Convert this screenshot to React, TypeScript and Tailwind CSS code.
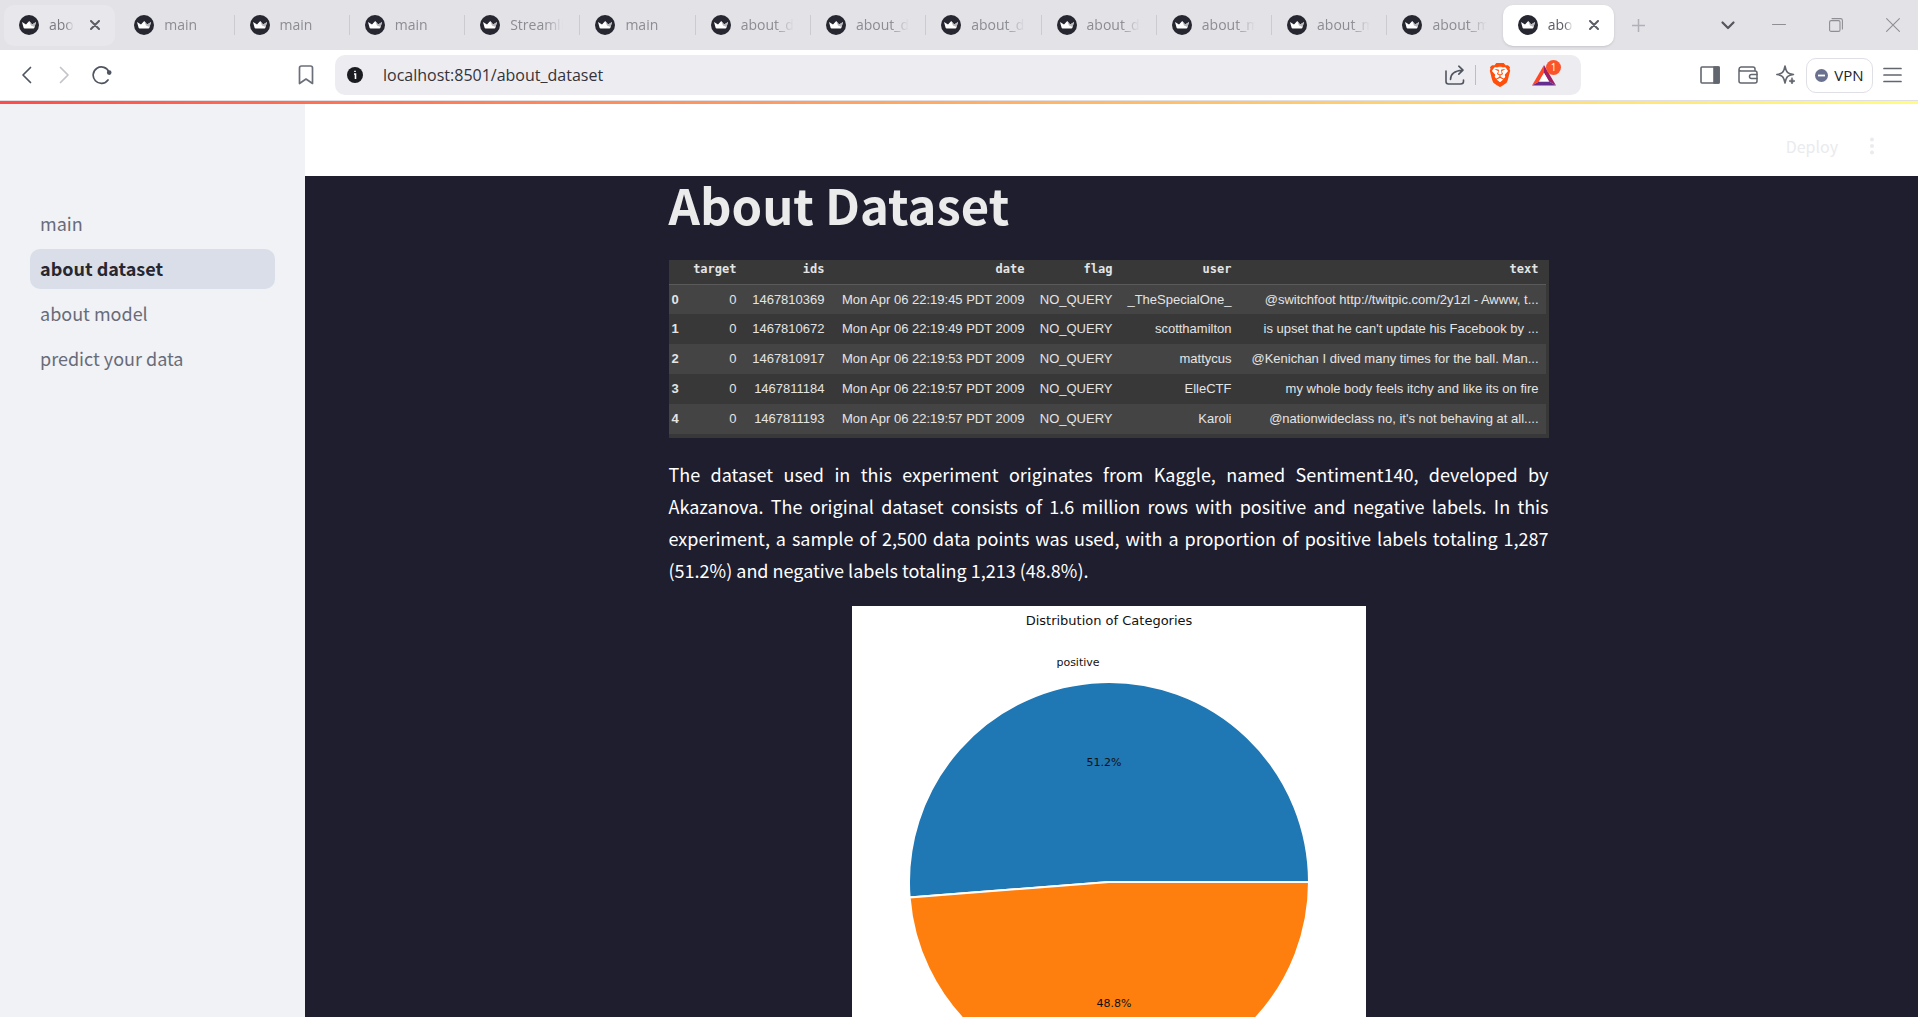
import React from "react";
import { SiBrave } from "react-icons/si";

const UI = "font-['Open_Sans','Noto_Sans',sans-serif]";
const SOURCE = "font-['Noto_Sans_CJK_JP',sans-serif]";

type TabInfo = { title: string; state?: "hover" | "active"; separator?: boolean };

const tabs: TabInfo[] = [
  { title: "about_dataset", state: "hover" },
  { title: "main", separator: true },
  { title: "main", separator: true },
  { title: "main", separator: true },
  { title: "Streamlit", separator: true },
  { title: "main", separator: true },
  { title: "about_dataset", separator: true },
  { title: "about_dataset", separator: true },
  { title: "about_dataset", separator: true },
  { title: "about_dataset", separator: true },
  { title: "about_model", separator: true },
  { title: "about_model", separator: true },
  { title: "about_model" },
  { title: "about_dataset", state: "active" },
];

const pages = ["main", "about dataset", "about model", "predict your data"];

const columns = ["target", "ids", "date", "flag", "user", "text"];

const rows = [
  ["0", "1467810369", "Mon Apr 06 22:19:45 PDT 2009", "NO_QUERY", "_TheSpecialOne_", "@switchfoot http://twitpic.com/2y1zl - Awww, t..."],
  ["0", "1467810672", "Mon Apr 06 22:19:49 PDT 2009", "NO_QUERY", "scotthamilton", "is upset that he can't update his Facebook by ..."],
  ["0", "1467810917", "Mon Apr 06 22:19:53 PDT 2009", "NO_QUERY", "mattycus", "@Kenichan I dived many times for the ball. Man..."],
  ["0", "1467811184", "Mon Apr 06 22:19:57 PDT 2009", "NO_QUERY", "ElleCTF", "my whole body feels itchy and like its on fire"],
  ["0", "1467811193", "Mon Apr 06 22:19:57 PDT 2009", "NO_QUERY", "Karoli", "@nationwideclass no, it's not behaving at all...."],
];

function Favicon() {
  return (
    <svg viewBox="0 0 20 20" className="size-5 shrink-0" aria-hidden="true">
      <circle cx="10" cy="10" r="10" fill="#262730" />
      <path d="M3 7 7 9.4 10.2 6 13.2 9.4 17 7 15.4 12.8Q15.2 13.6 14.4 13.6H5.6Q4.8 13.6 4.6 12.8Z" fill="#fff" />
      <path d="M10.2 6 13.2 9.4 17 7 15.6 12 12 10.4Z" fill="#b9b9bd" />
    </svg>
  );
}

type IconProps = { children: React.ReactNode; className: string; box?: string; width?: number };

function Icon({ children, className, box = "0 0 24 24", width = 2 }: IconProps) {
  return (
    <svg viewBox={box} className={className} fill="none" stroke="currentColor" strokeWidth={width} strokeLinecap="round" strokeLinejoin="round" aria-hidden="true">
      {children}
    </svg>
  );
}

function Tab({ title, state, separator }: TabInfo) {
  const shell =
    state === "active"
      ? "bg-white text-[#5c5c66] shadow-sm"
      : state === "hover"
        ? "bg-[#e8e8ec] text-[#7b7b82]"
        : "text-[#8c8c93]";
  return (
    <div className="flex min-w-0 flex-1 items-center">
      <div className={`mr-1 flex h-[41px] min-w-0 flex-1 items-center rounded-[10px] pl-[15px] ${state ? "pr-[15px]" : "pr-3"} ${shell}`}>
        <button role="tab" aria-selected={state === "active"} className="flex min-w-0 flex-1 items-center gap-[10px] text-left">
          <Favicon />
          <span className="min-w-0 flex-1 overflow-hidden whitespace-nowrap text-[14px] leading-6 [mask-image:linear-gradient(to_right,black_65%,transparent)]">
            {title}
          </span>
        </button>
        {state && (
          <button aria-label="Close tab" className="ml-4 shrink-0 text-[#5c5c66]">
            <Icon className="size-[10px]" box="0 0 10 10">
              <path d="M1 1 9 9M9 1 1 9" />
            </Icon>
          </button>
        )}
      </div>
      {separator && <span className="h-5 w-px bg-[#cbcbd0]" />}
    </div>
  );
}

function TabStrip() {
  return (
    <div className="flex h-[50px] shrink-0 items-center justify-between bg-[#e3e2e7] pl-1">
      <div role="tablist" className="flex max-w-[1614px] flex-1">
        {tabs.map((t, i) => (
          <Tab key={i} {...t} />
        ))}
      </div>
      <button aria-label="New tab" className="ml-[14px] text-[#b0b0b6]">
        <Icon className="size-[13px]" box="0 0 13 13" width={1.5}>
          <path d="M6.5 0V13M0 6.5H13" />
        </Icon>
      </button>
      <div className="ml-auto flex items-center gap-9 pr-[18px] text-[#8e8e94]">
        <button aria-label="Search tabs" className="text-[#55555e]">
          <Icon className="size-4" box="0 0 16 16" width={2.2}>
            <path d="M2.5 5.5 8 11 13.5 5.5" />
          </Icon>
        </button>
        <div className="flex items-center gap-[43px]">
          <button aria-label="Minimize">
            <Icon className="size-[14px]" box="0 0 14 14" width={1}>
              <path d="M.5 6.5H13.5" />
            </Icon>
          </button>
          <button aria-label="Restore">
            <Icon className="size-[14px]" box="0 0 14 14" width={1.1}>
              <rect x=".6" y="2.6" width="10.4" height="10.8" rx="1.5" />
              <path d="M3 .6H11.5Q13.4.6 13.4 2.5V11" />
            </Icon>
          </button>
          <button aria-label="Close window">
            <Icon className="size-[14px]" box="0 0 14 14" width={1.1}>
              <path d="M.6.6 13.4 13.4M13.4.6.6 13.4" />
            </Icon>
          </button>
        </div>
      </div>
    </div>
  );
}

function AddressBar() {
  return (
    <div className="flex h-10 max-w-[1246px] flex-1 items-center rounded-[10px] bg-[#edecf1] pl-3">
      <svg viewBox="0 0 16 16" className="size-4 shrink-0" aria-hidden="true">
        <circle cx="8" cy="8" r="8" fill="#1b1b22" />
        <path d="M7 7H8.5V12M8 3.8V5" stroke="#fff" strokeWidth="1.6" fill="none" />
      </svg>
      <input
        aria-label="Address"
        defaultValue="localhost:8501/about_dataset"
        className="ml-5 min-w-0 flex-1 bg-transparent text-[16px] text-[#33333b] outline-none"
      />
      <button aria-label="Share" className="text-[#4f5560]">
        <Icon className="size-5" box="0 0 20 20" width={1.6}>
          <path d="M1 6V16.5Q1 19 3.5 19H15.5Q18.5 19 18.5 16.5V15" />
          <path d="M5.5 14.5Q5.5 6 17.5 5.2M13.8 1.2 18 5.2 13.8 9.2" />
        </Icon>
      </button>
      <span className="ml-[10px] h-5 w-px bg-[#bdbdc4]" />
      <button aria-label="Brave Shields" className="relative ml-3 flex">
        <span className="absolute inset-x-1 inset-y-[5px] bg-white" />
        <SiBrave className="relative size-6 text-[#ff4f0a]" />
      </button>
      <button aria-label="Brave Rewards" className="relative ml-5 mr-[25px]">
        <svg viewBox="0 0 24 21" className="h-[21px] w-6" aria-hidden="true">
          <path d="M12 0 0 20.5 7 16.5 12 8Z" fill="#ff4724" />
          <path d="M12 0 24 20.5 17 16.5 12 8Z" fill="#9e1f63" />
          <path d="M0 20.5H24L17 16.5H7Z" fill="#662d91" />
          <path d="M12 8 7 16.5H17Z" fill="#fff" />
        </svg>
        <span className="absolute -right-[5px] -top-[5px] flex size-[15px] items-center justify-center rounded-full bg-[#fb542b] text-[10px] leading-none text-white">
          1
        </span>
      </button>
    </div>
  );
}

function Toolbar() {
  return (
    <div className="flex h-[50px] shrink-0 items-center bg-white pl-5 pr-4">
      <button aria-label="Back" className="text-[#4f5560]">
        <Icon className="h-[18px] w-3" box="0 0 12 18" width={1.7}>
          <path d="M10.5 1.5 3 9 10.5 16.5" />
        </Icon>
      </button>
      <button aria-label="Forward" className="ml-[27px] text-[#c3c3c9]">
        <Icon className="h-[18px] w-3" box="0 0 12 18" width={1.7}>
          <path d="M1.5 1.5 9 9 1.5 16.5" />
        </Icon>
      </button>
      <button aria-label="Reload" className="ml-[21px] text-[#4f5560]">
        <Icon className="size-5" box="0 0 20 20" width={1.7}>
          <path d="M16 15A8.2 8.2 0 1 1 17 7.2" />
          <circle cx="17.2" cy="7.6" r="1.5" fill="currentColor" />
        </Icon>
      </button>
      <button aria-label="Bookmark" className="ml-[186px] text-[#6b6f79]">
        <Icon className="h-5 w-4" box="0 0 16 20" width={1.7}>
          <path d="M1.5 3Q1.5 1 3.5 1H12.5Q14.5 1 14.5 3V18.5L8 14 1.5 18.5Z" />
        </Icon>
      </button>
      <div className="ml-[21px] flex flex-1">
        <AddressBar />
      </div>
      <div className="flex items-center gap-[18px] text-[#62666f]">
        <button aria-label="Sidebar">
          <Icon className="h-[18px] w-5" box="0 0 20 18" width={1.6}>
            <rect x="1" y="1" width="18" height="16" rx="1" />
            <path d="M14 1H19V17H14Z" fill="currentColor" />
          </Icon>
        </button>
        <button aria-label="Wallet">
          <Icon className="h-[18px] w-5" box="0 0 20 18" width={1.5}>
            <path d="M1 3.5V15Q1 17 3 17H17Q19 17 19 15V7Q19 5 17 5H3Q1 5 1 3.2T3 1H15Q17 1 17 3V5" />
            <path d="M19 8.5H13.5Q11.5 8.5 11.5 10.5T13.5 12.5H19" />
          </Icon>
        </button>
        <button aria-label="Leo AI">
          <Icon className="size-5" box="0 0 20 20" width={1.5}>
            <path d="M9 1Q9.9 6 11.8 7.6 13 8.8 17.5 9.5 13 10.2 11.8 11.4 9.9 13 9 18 8.1 13 6.2 11.4 5 10.2 .8 9.5 5 8.8 6.2 7.6 8.1 6 9 1Z" />
            <path d="M16 13Q16.3 15.8 19 16 16.3 16.3 16 19 15.7 16.3 13 16 15.7 15.8 16 13Z" fill="currentColor" strokeWidth={0.8} />
          </Icon>
        </button>
      </div>
      <button className="ml-[10px] flex h-[35px] w-[67px] items-center justify-center gap-[6px] rounded-[10px] border border-[#dfdfe6] text-[15px] text-[#22222a]">
        <svg viewBox="0 0 13 13" className="size-[13px]" aria-hidden="true">
          <circle cx="6.5" cy="6.5" r="6.5" fill="#69718f" />
          <rect x="3" y="5.6" width="7" height="1.8" fill="#fff" />
        </svg>
        VPN
      </button>
      <button aria-label="Menu" className="ml-[10px] text-[#62666f]">
        <Icon className="h-4 w-[19px]" box="0 0 19 16" width={1.7}>
          <path d="M1 1.5H18M1 8H18M1 14.5H18" />
        </Icon>
      </button>
    </div>
  );
}

function Sidebar() {
  return (
    <nav className={`w-[305px] shrink-0 bg-[#f0f2f6] px-[30px] pt-[100px] ${SOURCE}`}>
      <ul className="flex flex-col gap-[5px]">
        {pages.map((p) => {
          const current = p === "about dataset";
          return (
            <li key={p}>
              <a
                href={`#${p.replace(/ /g, "_")}`}
                aria-current={current ? "page" : undefined}
                className={`flex h-10 items-center rounded-[10px] px-[10px] pb-[2px] text-[18px] ${current ? "bg-[#dadee9] font-semibold text-[#262730]" : "text-[#696b78]"}`}
              >
                {p}
              </a>
            </li>
          );
        })}
      </ul>
    </nav>
  );
}

function DataTable() {
  return (
    <div className="mt-2 w-full bg-[#383838] pb-1 pr-[3px] text-[#e4e4e4]">
      <table className="w-full table-fixed border-collapse whitespace-nowrap text-right font-['Liberation_Sans',sans-serif] text-[13px]">
        <colgroup>
          <col className="w-[15px]" />
          <col className="w-[60px]" />
          <col className="w-[88px]" />
          <col className="w-[200px]" />
          <col className="w-[88px]" />
          <col className="w-[119px]" />
          <col />
        </colgroup>
        <thead>
          <tr className="h-6 border-b border-[#5a5a5a] font-['DejaVu_Sans_Mono',monospace] text-[12px]">
            <td />
            {columns.map((c) => (
              <th key={c} scope="col" className="pb-[6px] pr-[7px] text-right font-bold leading-4">
                {c}
              </th>
            ))}
          </tr>
        </thead>
        <tbody>
          {rows.map((r, i) => (
            <tr key={i} className="h-[30px] odd:bg-[#444444]">
              <th scope="row" className="pl-[3px] text-left font-bold">
                {i}
              </th>
              {r.map((v, j) => (
                <td key={j} className="pr-[7px]">
                  {v}
                </td>
              ))}
            </tr>
          ))}
        </tbody>
      </table>
    </div>
  );
}

function PieChart() {
  return (
    <svg viewBox="0 0 514 520" className="mx-auto mt-5 w-[514px] max-w-full bg-white font-['DejaVu_Sans',sans-serif]" role="img" aria-label="Distribution of Categories">
      <g fill="#111" textAnchor="middle" fontSize="11">
        <text x="257" y="19" fontSize="13">
          Distribution of Categories
        </text>
        <g stroke="#fff" strokeWidth="2">
          <path d="M257 276H457A200 200 0 1 0 57.6 291.5Z" fill="#1f77b4" />
          <path d="M257 276 57.6 291.5A200 200 0 0 0 457 276Z" fill="#ff7f0e" />
        </g>
        <text x="226" y="60">
          positive
        </text>
        <text x="252" y="160">
          51.2%
        </text>
        <text x="262" y="401">
          48.8%
        </text>
        <text x="288" y="500">
          negative
        </text>
      </g>
    </svg>
  );
}

function Content() {
  return (
    <div className="flex min-w-0 flex-1 flex-col">
      <header className={`flex h-[72px] shrink-0 items-center justify-end gap-6 bg-white pr-9 pt-3 text-[#e9ebee] ${SOURCE}`}>
        <button className="text-[16px]">Deploy</button>
        <button aria-label="App menu" className="flex w-5 justify-center">
          <svg viewBox="0 0 4 18" className="h-[18px] w-1" fill="currentColor" aria-hidden="true">
            <circle cx="2" cy="2.5" r="2" />
            <circle cx="2" cy="9" r="2" />
            <circle cx="2" cy="15.5" r="2" />
          </svg>
        </button>
      </header>
      <main className={`min-h-0 flex-1 overflow-hidden bg-[#1e1e2e] pr-[6px] ${SOURCE}`}>
        <div className="mx-auto max-w-[880px]">
          <h1 className="pb-5 text-[49px] font-bold leading-[56px] text-[#ebebeb]">About Dataset</h1>
          <DataTable />
          <p className="mt-5 text-justify text-[18px] leading-8 text-white">
            The dataset used in this experiment originates from Kaggle, named Sentiment140, developed by Akazanova. The original dataset
            consists of 1.6 million rows with positive and negative labels. In this experiment, a sample of 2,500 data points was used, with a
            proportion of positive labels totaling 1,287 (51.2%) and negative labels totaling 1,213 (48.8%).
          </p>
          <PieChart />
        </div>
      </main>
    </div>
  );
}

export default function App() {
  return (
    <div className={`flex h-screen flex-col overflow-hidden bg-white ${UI}`}>
      <TabStrip />
      <Toolbar />
      <div className="h-1 shrink-0 border-t border-[#dfdfe4] bg-linear-to-r from-[#ff4b4b] to-[#fffd80]" />
      <div className="flex min-h-0 flex-1">
        <Sidebar />
        <Content />
      </div>
    </div>
  );
}
